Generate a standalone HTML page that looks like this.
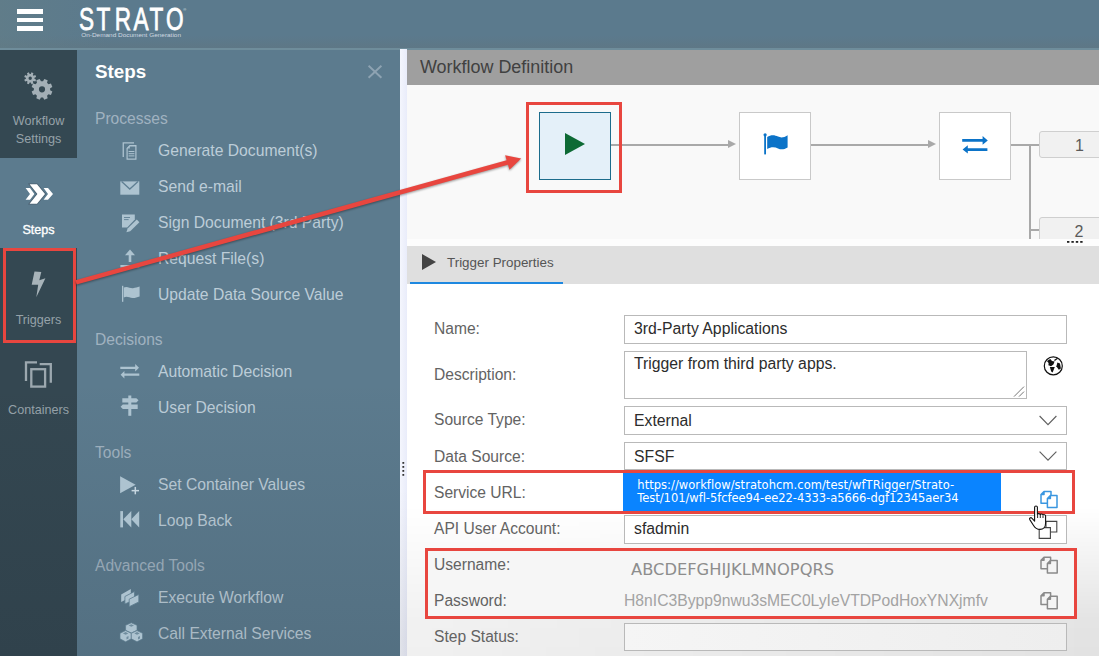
<!DOCTYPE html>
<html><head><meta charset="utf-8"><title>Strato Workflow</title>
<style>
*{box-sizing:border-box;margin:0;padding:0}
html,body{width:1099px;height:656px;overflow:hidden;background:#fff;font-family:"Liberation Sans",Arial,sans-serif}
.abs{position:absolute}
#hdr{left:0;top:0;width:1099px;height:49px;background:linear-gradient(to right,rgba(100,126,134,0.55) 0,rgba(100,126,134,0) 110px),linear-gradient(to bottom,#5b7a8d 0,#5b7a8d 72%,#5e7786 97%)}
#hdrline{left:0;top:48px;width:1099px;height:1.6px;background:#6f8d9b}
#nav{left:0;top:50px;width:77px;height:606px;background:#344751}
.tile{left:0;width:77px;background:#344852}
.navlbl{left:0;width:77px;text-align:center;font-size:12.6px;line-height:18.3px;color:#96a2a9}
#panel{left:77px;top:50px;width:323px;height:606px;background:#5c7b8e}
.gh{left:95px;font-size:15.6px;line-height:20px;color:#a0b2c0;white-space:nowrap}
.it{left:158px;font-size:15.7px;line-height:20px;color:#bccdd8;white-space:nowrap}
#strip{left:400px;top:49px;width:7px;height:607px;background:linear-gradient(90deg,#f4f6fd,#e9ecfa)}
#wfh{left:407px;top:49.5px;width:692px;height:35px;background:#9f9f9f}
#canvas{left:407px;top:84.5px;width:692px;height:154.5px;background:#f9f9f9}
#tpbar{left:407px;top:246px;width:692px;height:38px;background:#dfdfdf}
.node{width:72px;height:68px;top:112px;background:#fff;border:1px solid #c9c9c9}
.lbl{left:434px;font-size:15.6px;line-height:20px;color:#636363;white-space:nowrap}
.inp{left:624px;width:443px;height:28px;border:1px solid #b9b9b9;background:#fff;font-size:15.77px;line-height:24.5px;padding-left:9px;color:#2c2c2c;white-space:nowrap}
.red{border:3px solid #e8463f}
</style></head><body>
<div class="abs" id="hdr"></div>
<div class="abs" id="hdrline"></div>
<!-- hamburger -->
<div class="abs" style="left:17px;top:9px;width:26px;height:5px;background:#fff"></div>
<div class="abs" style="left:17px;top:17.8px;width:26px;height:4.2px;background:#fff"></div>
<div class="abs" style="left:17px;top:26px;width:26px;height:5px;background:#fff"></div>
<!-- logo -->
<svg class="abs" style="left:0;top:0" width="400" height="49"><text transform="scale(0.7,1)" x="112.8 137.8 164.1 190.8 213.4 237.3" y="30" font-family="Liberation Sans, Arial, sans-serif" font-size="32.3" fill="#fff" stroke="#fff" stroke-width="0.8">STRATO</text><text x="183.2" y="10.5" font-family="Liberation Sans, Arial, sans-serif" font-size="4" fill="#dfe7ec">®</text><text x="81.2" y="36.8" font-family="Liberation Sans, Arial, sans-serif" font-size="5.2" fill="#cfd9e0" textLength="99.8" lengthAdjust="spacingAndGlyphs">On-Demand Document Generation</text></svg>

<div class="abs" id="nav"></div>
<div class="abs tile" style="top:50px;height:108px"></div>
<div class="abs" style="left:0;top:158px;width:77px;height:90px;background:#5c7b8e"></div>
<div class="abs tile" style="top:248px;height:95px"></div>
<div class="abs navlbl" style="top:111.7px">Workflow<br>Settings</div>
<div class="abs navlbl" style="top:220.5px;color:#fff;-webkit-text-stroke:0.35px #fff">Steps</div>
<div class="abs navlbl" style="top:310.8px">Triggers</div>
<div class="abs navlbl" style="top:400.6px">Containers</div>

<div class="abs" id="panel"></div>
<div class="abs" style="left:95px;top:60px;font-size:18.8px;line-height:24px;font-weight:bold;color:#fff">Steps</div>


<div class="abs gh" style="top:108.5px">Processes</div>
<div class="abs it" style="top:140.5px">Generate Document(s)</div>
<div class="abs it" style="top:176.5px">Send e-mail</div>
<div class="abs it" style="top:212.5px">Sign Document (3rd Party)</div>
<div class="abs it" style="top:248.5px">Request File(s)</div>
<div class="abs it" style="top:284.5px">Update Data Source Value</div>
<div class="abs gh" style="top:329.5px">Decisions</div>
<div class="abs it" style="top:361.5px">Automatic Decision</div>
<div class="abs it" style="top:397.5px">User Decision</div>
<div class="abs gh" style="top:442.5px">Tools</div>
<div class="abs it" style="top:474.5px">Set Container Values</div>
<div class="abs it" style="top:510.5px">Loop Back</div>
<div class="abs gh" style="top:555.5px">Advanced Tools</div>
<div class="abs it" style="top:587.5px">Execute Workflow</div>
<div class="abs it" style="top:623.5px">Call External Services</div>

<div class="abs" style="left:0;top:380px;width:400px;height:276px;background:linear-gradient(to bottom,rgba(20,30,40,0) 0,rgba(20,30,40,0.1) 85%,rgba(20,30,40,0.12) 100%)"></div>
<div class="abs" id="strip"></div>
<div class="abs" style="left:400px;top:284px;width:7px;height:372px;background:linear-gradient(to bottom,rgba(0,0,0,0) 55%,rgba(0,0,0,0.08) 95%)"></div>
<div class="abs" id="wfh"></div>
<div class="abs" style="left:420px;top:55.5px;font-size:17.95px;line-height:22px;color:#414141;white-space:nowrap">Workflow Definition</div>
<div class="abs" id="canvas"></div>
<!-- nodes -->
<div class="abs" style="left:611px;top:143.8px;width:120px;height:1.9px;background:#a9a9a9"></div>
<div class="abs" style="left:811px;top:143.8px;width:120px;height:1.9px;background:#a9a9a9"></div>
<div class="abs" style="left:728px;top:140.2px;border-left:8.7px solid #a9a9a9;border-top:4.4px solid transparent;border-bottom:4.4px solid transparent"></div>
<div class="abs" style="left:928px;top:140.2px;border-left:8.7px solid #a9a9a9;border-top:4.4px solid transparent;border-bottom:4.4px solid transparent"></div>
<div class="abs" style="left:1011px;top:144px;width:30px;height:2px;background:#a9a9a9"></div>
<div class="abs" style="left:1029px;top:144px;width:2px;height:95px;background:#a9a9a9"></div>
<div class="abs" style="left:1029px;top:229px;width:12px;height:2px;background:#a9a9a9"></div>
<div class="abs" style="left:539px;top:112px;width:72px;height:68px;background:#e4f0f9;border:1px solid #1c6c8c"></div>
<div class="abs" style="left:565px;top:133px;border-left:20px solid #0d6a35;border-top:11px solid transparent;border-bottom:11px solid transparent"></div>
<div class="abs node" style="left:739px"></div>
<div class="abs node" style="left:939px"></div>
<div class="abs" style="left:1039px;top:131px;width:70px;height:27px;background:#f1f1f1;border:1px solid #cfcfcf;border-radius:3px"></div>
<div class="abs" style="left:1039px;top:217px;width:70px;height:27px;background:#f1f1f1;border:1px solid #cfcfcf;border-radius:3px"></div>
<div class="abs" style="left:1075px;top:136px;font-size:16px;line-height:20px;color:#5a5a5a">1</div>
<div class="abs" style="left:1074.5px;top:221.5px;font-size:16px;line-height:20px;color:#5a5a5a">2</div>
<div class="abs" style="left:407px;top:239px;width:692px;height:7px;background:#fdfdfd"></div>

<div class="abs" id="tpbar"></div>
<div class="abs" style="left:410px;top:282px;width:153px;height:2px;background:#1e88e0"></div>
<div class="abs" style="left:422px;top:254px;border-left:14px solid #444;border-top:8px solid transparent;border-bottom:8px solid transparent"></div>
<div class="abs" style="left:447px;top:254px;font-size:13.4px;line-height:18px;color:#555;white-space:nowrap">Trigger Properties</div>

<div class="abs" style="left:407px;top:284px;width:692px;height:372px;background:linear-gradient(to bottom,rgba(0,0,0,0) 0,rgba(0,0,0,0) 60%,rgba(0,0,0,0.105) 90%,rgba(0,0,0,0.115) 100%);-webkit-mask-image:linear-gradient(to right,rgba(0,0,0,0.5),#000);mask-image:linear-gradient(to right,rgba(0,0,0,0.5),#000)"></div>
<!-- form -->
<div class="abs lbl" style="top:318.5px">Name:</div>
<div class="abs inp" style="top:315px;height:28.5px;line-height:25.5px">3rd-Party Applications</div>
<div class="abs lbl" style="top:364.5px">Description:</div>
<div class="abs inp" style="top:351px;width:403px;height:47.6px;line-height:23px">Trigger from third party apps.</div>
<div class="abs lbl" style="top:409.5px">Source Type:</div>
<div class="abs inp" style="top:406px;height:28.5px;line-height:28px">External</div>
<div class="abs lbl" style="top:446.5px">Data Source:</div>
<div class="abs inp" style="top:442px;line-height:28px">SFSF</div>
<div class="abs lbl" style="top:483px">Service URL:</div>
<div class="abs lbl" style="top:519px">API User Account:</div>
<div class="abs inp" style="top:515px;height:28.8px;line-height:26.5px">sfadmin</div>
<div class="abs" style="left:426px;top:549px;width:650px;height:69px;background:#f6f6f6"></div>
<div class="abs lbl" style="top:554.5px">Username:</div>
<div class="abs lbl" style="top:590.5px">Password:</div>
<div class="abs lbl" style="top:626.5px">Step Status:</div>
<div class="abs inp" style="top:623px;background:linear-gradient(to right,#f5f5f5,#eee)"></div>
<div class="abs" style="left:631px;top:560px;font-family:'DejaVu Sans',sans-serif;font-size:16.3px;line-height:20px;color:#8d8d8d;white-space:nowrap">ABCDEFGHIJKLMNOPQRS</div>
<div class="abs" style="left:624px;top:590.5px;font-size:15.7px;line-height:20px;color:#a3a3a3;white-space:nowrap">H8nIC3Bypp9nwu3sMEC0LyIeVTDPodHoxYNXjmfv</div>
<!-- url highlight -->
<div class="abs" style="left:623px;top:472.8px;width:378px;height:38px;background:#0a84ff"></div>
<div class="abs" style="left:637.3px;top:479.2px;font-family:'DejaVu Sans',sans-serif;font-size:11.5px;line-height:12.9px;color:#fff;white-space:nowrap"><span style="letter-spacing:0.04px">https://workflow/stratohcm.com/test/wfTRigger/Strato-</span><br><span style="letter-spacing:-0.04px">Test/101/wfl-5fcfee94-ee22-4333-a5666-dgf12345aer34</span></div>
<!-- red boxes -->
<div class="abs red" style="left:3px;top:248px;width:73px;height:95px"></div>
<div class="abs red" style="left:526px;top:102px;width:96px;height:91px"></div>
<div class="abs red" style="left:423px;top:470.2px;width:652px;height:44px"></div>
<div class="abs red" style="left:425px;top:548px;width:652px;height:70.5px"></div>
<svg class="abs" style="left:0;top:0" width="1099" height="656">
<!-- nav icons -->
<path fill-rule="evenodd" fill="#a3afb6" d="M34.47 78.84 L36.15 79.63 L35.35 81.57 L33.60 80.94 L32.84 81.70 L33.47 83.45 L31.53 84.25 L30.74 82.57 L29.66 82.57 L28.87 84.25 L26.93 83.45 L27.56 81.70 L26.80 80.94 L25.05 81.57 L24.25 79.63 L25.93 78.84 L25.93 77.76 L24.25 76.97 L25.05 75.03 L26.80 75.66 L27.56 74.90 L26.93 73.15 L28.87 72.35 L29.66 74.03 L30.74 74.03 L31.53 72.35 L33.47 73.15 L32.84 74.90 L33.60 75.66 L35.35 75.03 L36.15 76.97 L34.47 77.76 Z M28.50 78.30 a1.70 1.70 0 1 0 3.40 0 a1.70 1.70 0 1 0 -3.40 0 Z"/>
<path fill-rule="evenodd" fill="#a3afb6" d="M50.14 90.33 L52.34 91.61 L50.95 94.98 L48.48 94.33 L47.03 95.78 L47.68 98.25 L44.31 99.64 L43.03 97.44 L40.97 97.44 L39.69 99.64 L36.32 98.25 L36.97 95.78 L35.52 94.33 L33.05 94.98 L31.66 91.61 L33.86 90.33 L33.86 88.27 L31.66 86.99 L33.05 83.62 L35.52 84.27 L36.97 82.82 L36.32 80.35 L39.69 78.96 L40.97 81.16 L43.03 81.16 L44.31 78.96 L47.68 80.35 L47.03 82.82 L48.48 84.27 L50.95 83.62 L52.34 86.99 L50.14 88.27 Z M38.90 89.30 a3.10 3.10 0 1 0 6.20 0 a3.10 3.10 0 1 0 -6.20 0 Z"/>
<g id="chev">
<polygon points="25.6,188 30,188 34.4,194 30,199.7 25.6,199.7 30,194" fill="#fff"/>
<polygon points="43.6,188 48,188 53,194 48,199.7 43.6,199.7 48,194" fill="#fff"/>
<polygon points="29.6,184.2 37,184.2 45,194 37,203.8 29.6,203.8 37.4,194" fill="#fff" stroke="#4a6070" stroke-width="1.6" paint-order="stroke"/>
</g>
<polygon points="34.5,271.4 41.3,272 39.3,280.2 45.4,278.3 36.3,297.3 38.2,284.8 31.7,284.8" fill="#a7b3b9"/>
<g fill="none" stroke="#9ca8af" stroke-width="2.3">
<polyline points="26,381 26,362.4 37,362.4"/>
<polyline points="39.7,364.2 50.8,364.2 50.8,382.8"/>
<rect x="31.3" y="369.2" width="13.8" height="17.4"/>
</g>
<g stroke="#8ea3b2" stroke-width="1.9"><line x1="368.6" y1="65.8" x2="381.4" y2="77.8"/><line x1="381.4" y1="65.8" x2="368.6" y2="77.8"/></g>
<!-- panel icons -->
<g fill="#adc3d0">
 <!-- generate doc -->
 <path d="M122.6 142.3 H134 V143.4 H123.9 V156.9 H122.6 Z"/>
 <path fill-rule="evenodd" d="M129.6 145.1 H136.5 V159.7 H126.5 V148.2 Z M129.9 146.4 L127.7 148.6 V158.5 H135.3 V146.4 Z"/>
 <path d="M129.8 145.3 V148.4 H126.7 Z" opacity="0.9"/>
 <rect x="128.6" y="151" width="5.8" height="1"/><rect x="128.6" y="153.2" width="5.8" height="1"/><rect x="128.6" y="155.4" width="5.8" height="1"/>
 <!-- envelope -->
 <path fill-rule="evenodd" d="M120.3 181.4 H139.3 V194.7 H120.3 Z"/>
 <polyline points="121.6,181.6 129.8,189 138,181.6" fill="none" stroke="#5f7f93" stroke-width="1.3"/>
 <!-- sign -->
 <path d="M122 214.6 H134.8 V219.5 L127.2 227.4 H122 Z"/>
 <rect x="124" y="217" width="6" height="0.9" fill="#5f7f93"/><rect x="124" y="219.2" width="4.6" height="0.9" fill="#5f7f93"/>
 <path d="M136.8 219.6 L139.4 222.2 L130.2 231.2 L126.4 232.3 L127.6 228.6 Z"/>
 <!-- upload -->
 <path d="M130 249.6 L135 255.2 H131.3 V262 H128.7 V255.2 H125 Z"/>
 <rect x="120.4" y="265" width="19" height="2.5"/>
 <!-- flag -->
 <rect x="122" y="285.8" width="1.3" height="16"/>
 <path d="M123.8 287.6 C127 285.6 130 288.6 133 288.2 C135.5 288 137.5 287 139.6 286.6 V296.4 C137 297 135 298.2 132.5 298 C129.5 297.8 127 295.6 123.8 297.4 Z"/>
 <!-- swap -->
 <path d="M120.3 366.8 H135.2 V364 L139 367.8 L135.2 371.6 V369 H120.3 Z"/>
 <path d="M139.3 373.6 H124.4 V370.9 L120.6 374.7 L124.4 378.5 V375.8 H139.3 Z"/>
 <!-- signpost -->
 <rect x="128.3" y="395.5" width="3" height="20.3"/>
 <path d="M122.3 398.2 H136.4 L138.5 400.3 L136.4 402.5 H122.3 Z"/>
 <path d="M137.7 404.6 H122.8 L120.6 406.7 L122.8 408.9 H137.7 Z"/>
 <!-- play plus -->
 <polygon points="120.1,476.2 135.6,484.7 120.1,493.3"/>
 <rect x="131.6" y="489.9" width="7.4" height="1.5" fill="#c6d6e0"/><rect x="134.55" y="486.9" width="1.5" height="7.4" fill="#c6d6e0"/>
 <!-- loop back -->
 <rect x="120.3" y="511.1" width="2.7" height="16.3"/>
 <polygon points="123.3,519.3 131.3,511.1 131.3,527.4"/>
 <polygon points="131.3,519.3 139.2,511.1 139.2,527.4"/>
 <!-- execute workflow -->
 <polygon points="121.2,594.4 130.8,589.1 130.8,597.1 121.2,601.9"/>
 <polygon points="124.9,596.5 134.5,591.5 134.5,599.7 124.9,604" stroke="#5c7b8e" stroke-width="0.8"/>
 <polygon points="129.2,599.2 138.8,594.4 138.8,601.9 129.2,606.7" stroke="#5c7b8e" stroke-width="0.8"/>
 <!-- cubes -->
 <g stroke="#5c7b8e" stroke-width="0.7" stroke-linejoin="round">
 <path d="M131.3 622.8 L137 625.3 V630.3 L131.3 633 L125.6 630.3 V625.3 Z"/>
 <path d="M125.6 630.6 L131.3 633.3 V638.8 L125.6 641.8 L120 638.8 V633.3 Z"/>
 <path d="M137 630.6 L142.6 633.3 V638.8 L137 641.8 L131.3 638.8 V633.3 Z"/>
 </g>
 <g fill="#5c7b8e" opacity="0.75">
 <path d="M131.3 624.2 L134 625.5 L131.3 626.8 L128.6 625.5 Z"/>
 <path d="M125.6 632 L128.3 633.4 L125.6 634.7 L122.9 633.4 Z"/>
 <path d="M137 632 L139.7 633.4 L137 634.7 L134.3 633.4 Z"/>
 <path d="M126.5 637 L128.5 636 V638.4 L126.5 639.4 Z"/>
 <path d="M138 637 L140 636 V638.4 L138 639.4 Z"/>
 </g>
</g>
<!-- canvas icons -->
<g fill="#0b73c8">
 <rect x="764.2" y="134" width="1.8" height="20.4"/><circle cx="765.1" cy="134.8" r="1.6"/>
 <path d="M767.2 137 C771 134.4 775 135 778 136.6 C781 138 784 137.6 787.6 135.2 V147.4 C784 149.6 781 149.8 778 148.4 C775 147 771 146.6 767.2 149 Z"/>
 <path d="M962.2 139.1 H982.6 V136 L987.8 140.4 L982.6 144.8 V141.8 H962.2 Z"/>
 <path d="M987.4 148.2 H967.8 V145.2 L962.6 149.5 L967.8 153.6 V150.9 H987.4 Z"/>
</g>
<!-- globe -->
<g>
<circle cx="1053.3" cy="365.9" r="9" fill="#fff" stroke="#111" stroke-width="1.2"/>
<path d="M1046.9 361 L1050.3 358.9 L1052 361 L1054.6 361.6 L1053.4 364.6 L1051 366.2 L1048.4 365.2 L1048.6 363 Z" fill="#111"/>
<path d="M1049.8 366.9 L1054.8 367 L1052.6 372.4 L1051.2 371.6 Z" fill="#111"/>
<path d="M1057.4 362.6 L1060 363.4 L1060.9 368.6 L1058.8 369.8 L1056.4 366.2 Z" fill="#111"/>
<path d="M1054.4 360.6 L1057.6 358.2" stroke="#111" stroke-width="1.3"/>
</g>
<!-- select chevrons -->
<g fill="none" stroke="#606060" stroke-width="1.15">
<polyline points="1039.6,416 1048,424.6 1056.4,416"/>
<polyline points="1039.6,451.6 1048,460.2 1056.4,451.6"/>
</g>
<!-- textarea grip -->
<g stroke="#666" stroke-width="0.9"><line x1="1014" y1="396.6" x2="1024" y2="386.6"/><line x1="1019" y1="396.6" x2="1024" y2="391.6"/></g>
<!-- copy icons -->
<g id="cp1" fill="#fff" stroke="#3a96e0" stroke-width="1.5" stroke-linejoin="round">
<path d="M1044 491.6 H1051 V503.2 H1041 V494.6 Z M1044 491.6 V494.6 H1041"/>
<path d="M1050.4 495.6 H1057 V507.6 H1047.4 V498.6 Z M1050.4 495.6 V498.6 H1047.4"/>
</g>
<g fill="#f4f4f4" stroke="#8a8a8a" stroke-width="1.5" stroke-linejoin="round">
<path d="M1044 557.3 H1050.6 V568.8 H1041 V560.3 Z M1044 557.3 V560.3 H1041"/>
<path d="M1050.4 560.6 H1057.2 V573 H1047.4 V563.6 Z M1050.4 560.6 V563.6 H1047.4"/>
<path d="M1044 592.8 H1050.6 V604.6 H1041 V595.8 Z M1044 592.8 V595.8 H1041"/>
<path d="M1050.4 596.3 H1057.2 V608.7 H1047.4 V599.3 Z M1050.4 596.3 V599.3 H1047.4"/>
</g>
<!-- dark copy icon in API row -->
<g fill="#fff" stroke="#444" stroke-width="1.1">
<path d="M1046 521.4 H1056.8 V532 H1046 Z"/>
<path d="M1039.2 527.6 H1050.4 V538.4 H1039.2 Z"/>
</g>
<!-- splitter dots & canvas dots -->
<g fill="#333"><rect x="402.4" y="462" width="1.8" height="1.8"/><rect x="402.4" y="466" width="1.8" height="1.8"/><rect x="402.4" y="470" width="1.8" height="1.8"/><rect x="402.4" y="474" width="1.8" height="1.8"/></g>
<g fill="#222"><rect x="1067" y="241" width="2.4" height="1.8"/><rect x="1071.4" y="241" width="2.4" height="1.8"/><rect x="1075.8" y="241" width="2.4" height="1.8"/><rect x="1080.2" y="241" width="2.4" height="1.8"/></g>
<!-- red arrow -->
<g style="filter:drop-shadow(0.5px 1.5px 1.2px rgba(0,0,0,.4))"><line x1="76" y1="282.4" x2="509" y2="162" stroke="#e8463f" stroke-width="4.5"/>
<polygon points="521.2,158.5 505.1,155.2 509.5,169.8" fill="#e8463f"/></g>
<!-- hand cursor -->
<path d="M1034.6 507.2 C1034.6 505.6 1037.4 505.6 1037.4 507.2 V514.4 C1037.8 513.2 1040 513.4 1040.2 514.6 C1040.8 513.6 1042.8 513.8 1043 515 C1043.6 514.2 1045.6 514.6 1045.6 516 V523 C1045.6 526.6 1043.4 529.4 1040 529.4 C1036.6 529.4 1034.8 527.6 1033.4 525.2 L1029.8 519.6 C1029 518.2 1030.8 517 1031.8 518.2 L1034.6 521.2 Z" fill="#fff" stroke="#111" stroke-width="1.1" stroke-linejoin="round"/>
<g stroke="#111" stroke-width="0.9"><line x1="1037.6" y1="514.6" x2="1037.6" y2="518"/><line x1="1040.3" y1="514.8" x2="1040.3" y2="518"/><line x1="1043" y1="515.4" x2="1043" y2="518"/></g>
</svg>
</body></html>
